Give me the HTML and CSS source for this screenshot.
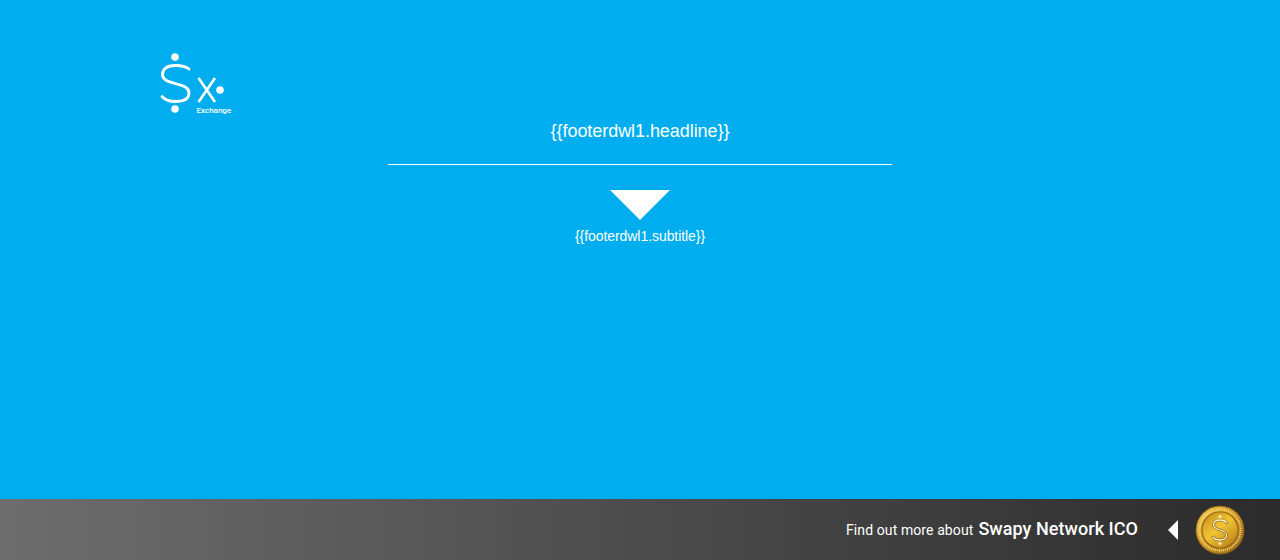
FILE: index.html
```html
<!DOCTYPE html>
<html lang="en">
<head>
    <meta charset="UTF-8">
    <meta name="viewport" content="width=device-width, initial-scale=1.0">
    <title>Swapy Exchange</title>
    <link rel="stylesheet" href="styles.css">
</head>
<body>

    <div class="page">
        <header class="logo-row">
            <svg class="logo" width="72" height="64" viewBox="0 0 72 64" fill="none">
                <circle cx="15" cy="5" r="3.8" fill="#fff"/>
                <circle cx="15" cy="57" r="3.8" fill="#fff"/>
                <path d="M29 17C26 14.5 21 13.5 15.5 13.5C7.5 13.5 2.5 16 2.5 22.5C2.5 28 8 29.5 15 31.5C22 33.5 29 35 29 41C29 47 23 49.5 15.5 49.5C9 49.5 5 48 2 44.5" stroke="#fff" stroke-width="2.8" stroke-linecap="round"/>
                <path d="M38.5 26L55 50M55 26L38.5 50" stroke="#fff" stroke-width="2.6"/>
                <circle cx="60" cy="38" r="3.8" fill="#fff"/>
                <text class="logo-text" x="36.5" y="61">Exchange</text>
            </svg>
        </header>

        <main class="download">
            <h2 class="headline">{{footerdwl1.headline}}</h2>
            <div class="arrow-down"></div>
            <p class="subtitle">{{footerdwl1.subtitle}}</p>
        </main>
    </div>

    <footer class="ico-bar">
        <span class="ico-small">Find out more about</span>
        <span class="ico-big">Swapy Network ICO</span>
        <div class="arrow-left"></div>
        <svg class="coin" width="50" height="50" viewBox="0 0 50 50">
            <defs>
                <linearGradient id="rim" x1="0" y1="0" x2="1" y2="1">
                    <stop offset="0" stop-color="#f3cf57"/>
                    <stop offset="0.45" stop-color="#d59c22"/>
                    <stop offset="1" stop-color="#9a6414"/>
                </linearGradient>
                <linearGradient id="face" x1="0.1" y1="0" x2="0.9" y2="1">
                    <stop offset="0" stop-color="#c78d18"/>
                    <stop offset="0.45" stop-color="#f0c435"/>
                    <stop offset="1" stop-color="#b57a16"/>
                </linearGradient>
            </defs>
            <circle cx="25" cy="25" r="24.5" fill="#7d5a22"/>
            <circle cx="25" cy="25" r="23.6" fill="url(#rim)"/>
            <circle cx="25" cy="25" r="20.5" fill="none" stroke="#f9e08a" stroke-width="1.8" stroke-dasharray="1 1"/>
            <circle cx="25" cy="25" r="18" fill="url(#face)" stroke="#9b6814" stroke-width="1.2"/>
            <circle cx="25" cy="11.5" r="1.6" fill="#fbeeb0"/>
            <circle cx="25" cy="38.5" r="1.6" fill="#fbeeb0"/>
            <path d="M32 18C30.5 15.8 28 15 25 15C21 15 18.5 17 18.5 20C18.5 23 21.5 24 25 25C28.5 26 31.5 27 31.5 30C31.5 33 29 35 25 35C22 35 19.5 34 18 32" fill="none" stroke="#8a5c12" stroke-width="2.6" stroke-linecap="round"/>
            <path d="M32 18C30.5 15.8 28 15 25 15C21 15 18.5 17 18.5 20C18.5 23 21.5 24 25 25C28.5 26 31.5 27 31.5 30C31.5 33 29 35 25 35C22 35 19.5 34 18 32" fill="none" stroke="#fdf3c4" stroke-width="1.3" stroke-linecap="round"/>
        </svg>
    </footer>

</body>
</html>
```

FILE: styles.css
```css
html, body {
    margin: 0;
    padding: 0;
}
body {
    width: 1280px;
    height: 560px;
    overflow: hidden;
    display: flex;
    flex-direction: column;
    background-color: #00aeef;
    color: #fff;
    font-family: Roboto, sans-serif;
}
.page {
    height: 499px;
}
.logo-row {
    padding: 52px 0 0 160px;
    height: 66px;
}
.logo {
    display: block;
}
.logo-text {
    font-family: Roboto, sans-serif;
    font-size: 8px;
    font-weight: 500;
    fill: #fff;
}
.download {
    display: flex;
    flex-direction: column;
    align-items: center;
    font-family: "Liberation Sans", Arial, sans-serif;
}
.headline {
    width: 504px;
    margin: 0;
    padding: 1px 0 20px;
    border-bottom: 1px solid #fff;
    text-align: center;
    font-size: 18px;
    line-height: 25px;
    font-weight: 400;
    letter-spacing: -0.06px;
}
.arrow-down {
    width: 0;
    height: 0;
    margin-top: 25px;
    border-left: 30px solid transparent;
    border-right: 30px solid transparent;
    border-top: 30px solid #fff;
}
.subtitle {
    margin: 6px 0 0;
    font-size: 14px;
    line-height: 20px;
    letter-spacing: -0.06px;
}
.ico-bar {
    height: 61px;
    display: flex;
    align-items: center;
    justify-content: flex-end;
    padding-right: 35px;
    background: linear-gradient(to right, #6d6d6d, #2b2b2b);
}
.ico-small {
    font-size: 14px;
    letter-spacing: 0.1px;
    margin-right: 5px;
    margin-top: 1px;
}
.ico-big {
    font-size: 18px;
    font-weight: 500;
    letter-spacing: 0.05px;
    margin-top: -2px;
}
.arrow-left {
    width: 0;
    height: 0;
    margin: 0 17px 0 30px;
    border-top: 10px solid transparent;
    border-bottom: 10px solid transparent;
    border-right: 10px solid #fff;
}
.coin {
    display: block;
}
```
